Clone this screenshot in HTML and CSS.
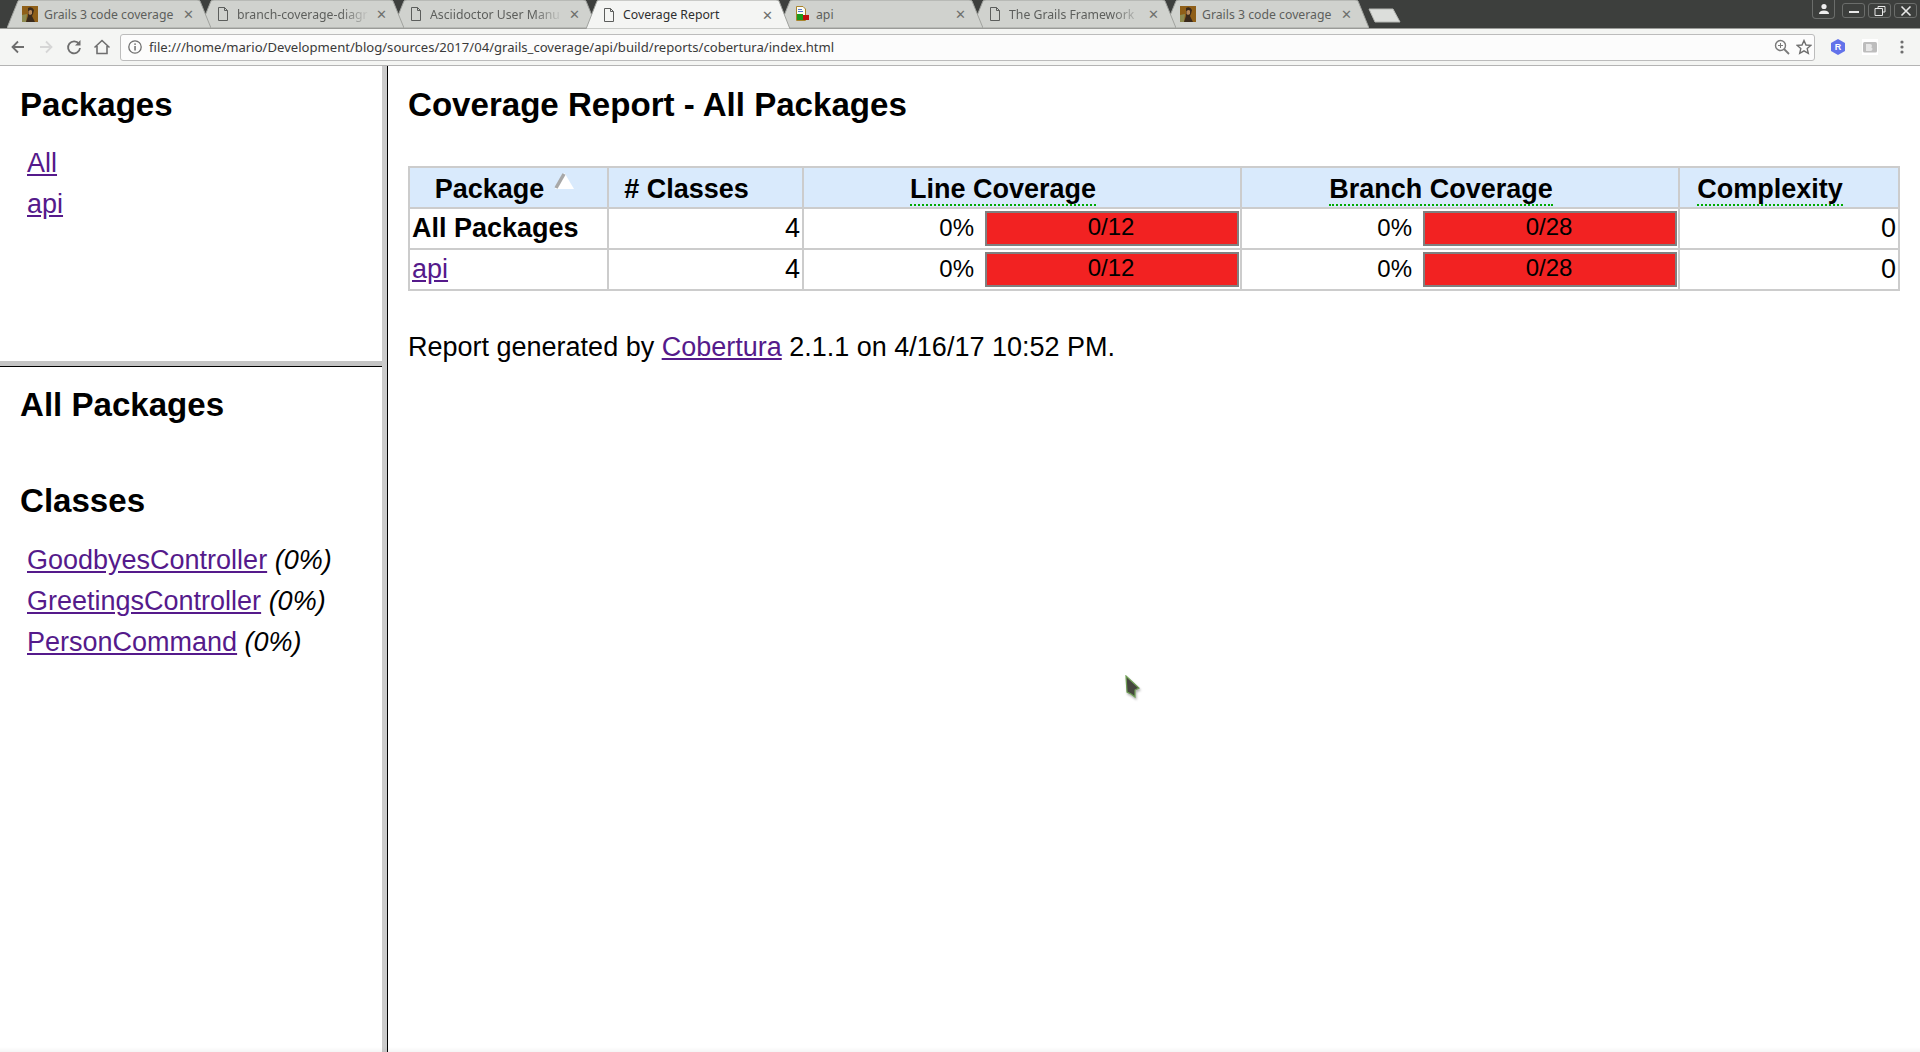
FILE: index.html
```html
<!DOCTYPE html>
<html lang="en">
<head>
  <meta charset="UTF-8" />
  <title>Coverage Report</title>
  <link rel="stylesheet" href="styles.css">
</head>
<body>

  <svg class="defs" width="0" height="0">
    <symbol id="tabShape" viewBox="0 0 204 29" preserveAspectRatio="none">
      <path d="M0 29 L11 1 Q12 0 14 0 H190 Q192 0 193 1 L204 29 Z" />
    </symbol>
    <symbol id="docIcon" viewBox="0 0 16 16">
      <path d="M3.5 1.5 H9.5 L12.5 4.5 V14.5 H3.5 Z M9.5 1.5 V4.5 H12.5" fill="none" stroke="#5c5e5c" stroke-width="1" />
    </symbol>
    <symbol id="faceIcon" viewBox="0 0 16 16">
      <rect width="16" height="16" fill="#8f5f18" />
      <path d="M0 9 L5 8 L4 16 H0 Z" fill="#8d8a50" />
      <path d="M6 2 Q10 0 12 4 L11 8 L10 10 L13 16 H4 L6 10 Z" fill="#3a2a1c" />
      <path d="M6.5 5 Q9 3 10 5 L10 8 L8 9 L6.5 8 Z" fill="#b98a5c" />
    </symbol>
  </svg>

  <!-- Tab strip -->
  <div class="tabstrip">
    <div class="tab">
      <svg class="tab-bg"><use href="#tabShape" /></svg>
      <svg class="favicon"><use href="#faceIcon" /></svg>
      <span class="tab-title">Grails 3 code coverage</span>
      <span class="tab-close">✕</span>
    </div>
    <div class="tab">
      <svg class="tab-bg"><use href="#tabShape" /></svg>
      <svg class="favicon"><use href="#docIcon" /></svg>
      <span class="tab-title fade">branch-coverage-diagr</span>
      <span class="tab-close">✕</span>
    </div>
    <div class="tab">
      <svg class="tab-bg"><use href="#tabShape" /></svg>
      <svg class="favicon"><use href="#docIcon" /></svg>
      <span class="tab-title fade">Asciidoctor User Manu</span>
      <span class="tab-close">✕</span>
    </div>
    <div class="tab active">
      <svg class="tab-bg"><use href="#tabShape" /></svg>
      <svg class="favicon"><use href="#docIcon" /></svg>
      <span class="tab-title">Coverage Report</span>
      <span class="tab-close">✕</span>
    </div>
    <div class="tab">
      <svg class="tab-bg"><use href="#tabShape" /></svg>
      <svg class="favicon" viewBox="0 0 16 16">
        <path d="M2.5 .5 H9 L11.5 3 V14.5 H2.5 Z" fill="#fdfdf5" stroke="#a8842c" />
        <rect x="4" y="3" width="4" height="1" fill="#5577cc" />
        <rect x="4" y="5" width="5" height="1" fill="#5577cc" />
        <rect x="3" y="8" width="6" height="6" fill="#1c9a1c" />
        <rect x="9" y="9" width="6" height="5" fill="#c01010" />
      </svg>
      <span class="tab-title">api</span>
      <span class="tab-close">✕</span>
    </div>
    <div class="tab">
      <svg class="tab-bg"><use href="#tabShape" /></svg>
      <svg class="favicon"><use href="#docIcon" /></svg>
      <span class="tab-title fade">The Grails Framework</span>
      <span class="tab-close">✕</span>
    </div>
    <div class="tab">
      <svg class="tab-bg"><use href="#tabShape" /></svg>
      <svg class="favicon"><use href="#faceIcon" /></svg>
      <span class="tab-title">Grails 3 code coverage</span>
      <span class="tab-close">✕</span>
    </div>
    <div class="newtab">
      <svg width="33" height="15" viewBox="0 0 33 15"><path d="M1 1 H25 L32 14 H7 Z" fill="#dcdedb" stroke="#b5b7b3" /></svg>
    </div>

    <div class="window-btns">
      <div class="profile-btn">
        <svg width="12" height="12" viewBox="0 0 12 12"><circle cx="6" cy="3.5" r="2.6" fill="#eee" /><path d="M1 11 Q1 7.5 6 7.5 Q11 7.5 11 11 Z" fill="#eee" /></svg>
      </div>
      <div class="win-btn">
        <svg width="12" height="12" viewBox="0 0 12 12"><rect x="1" y="6" width="10" height="2" fill="#e8e8e8" /></svg>
      </div>
      <div class="win-btn">
        <svg width="12" height="12" viewBox="0 0 12 12"><path d="M4 3 V1.5 H11 V7 H9 M1 3.5 H8.5 V10.5 H1 Z" fill="none" stroke="#e8e8e8" /></svg>
      </div>
      <div class="win-btn">
        <svg width="12" height="12" viewBox="0 0 12 12"><path d="M1.5 1.5 L10.5 10.5 M10.5 1.5 L1.5 10.5" stroke="#e8e8e8" stroke-width="1.6" /></svg>
      </div>
    </div>
  </div>

  <!-- Toolbar -->
  <div class="toolbar">
    <div class="nav-btns">
      <svg width="18" height="18" viewBox="0 0 18 18"><path d="M15 9 H4 M9 3.5 L3.5 9 L9 14.5" fill="none" stroke="#6e6e6e" stroke-width="1.8" /></svg>
      <svg width="18" height="18" viewBox="0 0 18 18"><path d="M3 9 H14 M9 3.5 L14.5 9 L9 14.5" fill="none" stroke="#d6d6d6" stroke-width="1.8" /></svg>
      <svg width="18" height="18" viewBox="0 0 18 18"><path d="M14 6 A6 6 0 1 0 15 10" fill="none" stroke="#6e6e6e" stroke-width="1.8" /><path d="M15.5 2 V7.5 H10 Z" fill="#6e6e6e" /></svg>
      <svg width="18" height="18" viewBox="0 0 18 18"><path d="M1.5 9.5 L9 2.5 L16.5 9.5 M4 8 V15.5 H14 V8" fill="none" stroke="#6e6e6e" stroke-width="1.6" /></svg>
    </div>
    <div class="addressbar">
      <svg class="info-icon" width="16" height="16" viewBox="0 0 16 16"><circle cx="8" cy="8" r="6.2" fill="none" stroke="#6e6e6e" stroke-width="1.3" /><rect x="7.3" y="7" width="1.5" height="4.5" fill="#6e6e6e" /><rect x="7.3" y="4.4" width="1.5" height="1.5" fill="#6e6e6e" /></svg>
      <span class="url">file:///home/mario/Development/blog/sources/2017/04/grails_coverage/api/build/reports/cobertura/index.html</span>
      <svg width="16" height="16" viewBox="0 0 16 16"><circle cx="6.5" cy="6.5" r="5" fill="none" stroke="#7a7a7a" stroke-width="1.4" /><path d="M10 10 L15 15" stroke="#7a7a7a" stroke-width="1.8" /><path d="M4 6.5 H9 M6.5 4 V9" stroke="#7a7a7a" /></svg>
      <svg width="16" height="16" viewBox="0 0 16 16"><path d="M8 1.5 L10 6 L14.8 6.4 L11.2 9.6 L12.3 14.4 L8 11.8 L3.7 14.4 L4.8 9.6 L1.2 6.4 L6 6 Z" fill="none" stroke="#6e6e6e" stroke-width="1.4" /></svg>
    </div>
    <div class="ext-btns">
      <svg width="16" height="16" viewBox="0 0 16 16"><path d="M8 0 L15 4 V12 L8 16 L1 12 V4 Z" fill="#6272ea" /><text x="8" y="11" class="ext-r">R</text></svg>
      <svg width="16" height="16" viewBox="0 0 16 16"><rect width="16" height="16" fill="#fff" /><rect x="1" y="3" width="14" height="10.5" rx="1.5" fill="#bdbdbd" /><path d="M4 5 H8 Q10 5 10 7 Q10 8 9 8.3 Q10.5 8.6 10.5 10 Q10.5 12 8.5 12 H4 Z" fill="#e6e6e6" /></svg>
      <svg width="16" height="16" viewBox="0 0 16 16"><circle cx="8" cy="3" r="1.6" fill="#6e6e6e" /><circle cx="8" cy="8" r="1.6" fill="#6e6e6e" /><circle cx="8" cy="13" r="1.6" fill="#6e6e6e" /></svg>
    </div>
  </div>

  <!-- Frames -->
  <div class="frames">
    <div class="side">
      <div class="pkg-frame">
        <h2>Packages</h2>
        <ul class="links">
          <li><a href="#">All</a></li>
          <li><a href="#">api</a></li>
        </ul>
      </div>
      <div class="class-frame">
        <h2>All Packages</h2>
        <h2 class="classes-title">Classes</h2>
        <ul class="links">
          <li><a href="#">GoodbyesController</a> <i>(0%)</i></li>
          <li><a href="#">GreetingsController</a> <i>(0%)</i></li>
          <li><a href="#">PersonCommand</a> <i>(0%)</i></li>
        </ul>
      </div>
    </div>

    <div class="main">
      <h1>Coverage Report - All Packages</h1>
      <table class="report">
        <colgroup>
          <col class="col-pkg"><col class="col-classes"><col class="col-cov"><col class="col-cov"><col class="col-cx">
        </colgroup>
        <thead>
          <tr>
            <th><span class="sort-wrap">Package<svg class="sort-icon" width="22" height="18" viewBox="0 0 22 18"><path d="M11.5 1 L21 17 H2 Z" fill="#fff" /><path d="M11 2 L3 16" stroke="#a8a8a8" stroke-width="3.5" /></svg></span></th>
            <th># Classes</th>
            <th><span class="hint">Line Coverage</span></th>
            <th><span class="hint">Branch Coverage</span></th>
            <th><span class="hint">Complexity</span></th>
          </tr>
        </thead>
        <tbody>
          <tr>
            <td><b>All Packages</b></td>
            <td class="num">4</td>
            <td><div class="cov"><span class="pct">0%</span><div class="bar">0/12</div></div></td>
            <td><div class="cov"><span class="pct">0%</span><div class="bar">0/28</div></div></td>
            <td class="num">0</td>
          </tr>
          <tr>
            <td><a href="#">api</a></td>
            <td class="num">4</td>
            <td><div class="cov"><span class="pct">0%</span><div class="bar">0/12</div></div></td>
            <td><div class="cov"><span class="pct">0%</span><div class="bar">0/28</div></div></td>
            <td class="num">0</td>
          </tr>
        </tbody>
      </table>
      <p class="footer">Report generated by <a href="#">Cobertura</a> 2.1.1 on 4/16/17 10:52 PM.</p>
    </div>
  </div>

  <div class="bottom-shade"></div>

  <!-- Mouse pointer -->
  <svg class="pointer" width="18" height="26" viewBox="0 0 18 26"><path d="M2 1 L15 13 L11 15 L11 22 L7 19 L3 17 Z" fill="#46463f" stroke="#6f9f55" stroke-width="1.2" /></svg>

</body>
</html>
```

FILE: styles.css
```css
html, body {
  height: 100%;
}

body {
  margin: 0;
  font-family: 'Liberation Sans', Arial, sans-serif;
  font-size: 27px;
  color: #000;
  background-color: #fff;
  display: flex;
  flex-direction: column;
  overflow: hidden;
}

.defs {
  display: block;
  height: 0;
}

a {
  color: #551a8b;
}

/* Tab strip */
.tabstrip {
  height: 29px;
  flex: none;
  display: flex;
  padding-left: 7px;
  background-color: #3d3f3d;
  box-shadow: inset 0 -1px 0 #9a9b98;
  font-family: 'Noto Sans', sans-serif;
  font-size: 12.25px;
}

.tab {
  position: relative;
  width: 204px;
  height: 28px;
  margin-right: -11px;
  padding: 0 16px 0 15px;
  box-sizing: border-box;
  display: flex;
  align-items: center;
  color: #5d5f5c;
}

.tab:nth-child(1) { z-index: 7; }
.tab:nth-child(2) { z-index: 6; }
.tab:nth-child(3) { z-index: 5; }
.tab:nth-child(4) { z-index: 4; }
.tab:nth-child(5) { z-index: 3; }
.tab:nth-child(6) { z-index: 2; }
.tab:nth-child(7) { z-index: 1; }

.tab.active {
  z-index: 9;
  height: 29px;
  color: #2e2e2e;
}

.tab-bg {
  position: absolute;
  left: 0;
  top: 0;
  width: 100%;
  height: 100%;
  fill: #d0d2ce;
  stroke: #9fa19d;
  stroke-width: 1;
}

.tab.active .tab-bg {
  fill: #f4f5f3;
}

.favicon {
  position: relative;
  width: 16px;
  height: 16px;
  flex: none;
  margin-right: 6px;
}

.tab-title {
  position: relative;
  flex: 1;
  white-space: nowrap;
  overflow: hidden;
}

.tab-title.fade {
  -webkit-mask-image: linear-gradient(to right, #000 78%, transparent 100%);
  mask-image: linear-gradient(to right, #000 78%, transparent 100%);
}

.tab-close {
  position: relative;
  flex: none;
  width: 14px;
  margin-left: 4px;
  font-size: 13px;
  text-align: center;
  color: #6e706d;
}

.newtab {
  display: flex;
  align-items: center;
  margin-left: 10px;
  padding-top: 1px;
}

.window-btns {
  margin-left: auto;
  padding-right: 3px;
  display: flex;
  gap: 3px;
  align-items: flex-start;
}

.profile-btn {
  width: 23px;
  height: 19px;
  margin-right: 4px;
  border: 1px solid #6b6d6b;
  border-top: none;
  border-radius: 0 0 4px 4px;
  box-sizing: border-box;
  display: flex;
  align-items: center;
  justify-content: center;
}

.win-btn {
  width: 23px;
  height: 15px;
  margin-top: 3px;
  border: 1px solid #6b6d6b;
  border-radius: 3px;
  box-sizing: border-box;
  display: flex;
  align-items: center;
  justify-content: center;
}

/* Toolbar */
.toolbar {
  height: 37px;
  flex: none;
  display: flex;
  align-items: center;
  padding: 0 10px 0 9px;
  box-sizing: border-box;
  background-color: #f4f5f3;
  border-bottom: 1px solid #b4b4b4;
}

.nav-btns {
  display: flex;
  gap: 10px;
  width: 111px;
  flex: none;
}

.addressbar {
  width: 1695px;
  height: 27px;
  flex: none;
  box-sizing: border-box;
  display: flex;
  align-items: center;
  gap: 6px;
  padding: 0 2px 0 6px;
  background-color: #fcfcfc;
  border: 1px solid #bcbcbc;
  border-radius: 3px;
  font-family: 'Noto Sans', sans-serif;
  font-size: 13.1px;
  color: #3a3a3a;
}

.url {
  flex: 1;
  white-space: nowrap;
}

.ext-btns {
  display: flex;
  gap: 16px;
  margin-left: 15px;
}

.ext-r {
  font-family: 'Liberation Sans', sans-serif;
  font-size: 9px;
  font-weight: bold;
  fill: #fff;
  text-anchor: middle;
}

/* Frames */
.frames {
  flex: 1;
  display: flex;
  min-height: 0;
}

.side {
  width: 388px;
  flex: none;
  box-sizing: border-box;
  display: flex;
  flex-direction: column;
  border-right: 1px solid #000;
  box-shadow: inset -5px 0 0 #cbcbcb;
  padding-right: 5px;
}

.pkg-frame {
  height: 300px;
  flex: none;
  box-sizing: border-box;
  padding: 20px 0 0 20px;
  border-bottom: 5px solid #c4c4c4;
}

.class-frame {
  flex: 1;
  padding: 19px 0 0 20px;
  border-top: 1px solid #000;
}

h1, h2 {
  margin: 0;
  font-size: 33.1px;
  line-height: 38px;
  font-weight: bold;
}

.classes-title {
  margin-top: 58px;
}

.links {
  list-style: none;
  margin: 19px 0 0 7px;
  padding: 0;
  line-height: 41px;
}

.classes-title + .links {
  margin-top: 20px;
}

.main {
  flex: 1;
  padding: 20px 20px 0;
  min-width: 0;
}

/* Report table */
.report {
  width: 100%;
  margin-top: 42px;
  table-layout: fixed;
  border-collapse: collapse;
}

.col-pkg { width: 199px; }
.col-classes { width: 195px; }
.col-cov { width: 438px; }
.col-cx { width: 220px; }

.report th,
.report td {
  border: 2px solid #cccccc;
  height: 41px;
  padding: 0 2px;
  box-sizing: border-box;
  white-space: nowrap;
}

.report th {
  background-color: #d9eafc;
  padding-top: 3px;
  padding-right: 40px;
  text-align: center;
  line-height: 30px;
}

.report td.num {
  text-align: right;
}

.sort-wrap {
  position: relative;
}

.sort-icon {
  position: absolute;
  left: calc(100% + 9px);
  top: -2px;
}

.hint {
  border-bottom: 2px dotted #00aa00;
}

.cov {
  display: flex;
  align-items: center;
  justify-content: flex-end;
  gap: 11px;
  margin-right: -1px;
  font-size: 24px;
  line-height: 27px;
}

.pct {
  margin-bottom: 2px;
}

.bar {
  width: 254px;
  height: 35px;
  box-sizing: border-box;
  border: 2px solid #808080;
  padding-right: 2px;
  background-color: #f22222;
  line-height: 28px;
  text-align: center;
}

.footer {
  margin: 36px 0 0;
  line-height: 41px;
}

.bottom-shade {
  position: absolute;
  left: 0;
  right: 0;
  bottom: 0;
  height: 5px;
  background: linear-gradient(to bottom, rgba(0, 0, 0, 0), rgba(0, 0, 0, 0.04));
}

.pointer {
  position: absolute;
  left: 1124px;
  top: 675px;
  filter: drop-shadow(1px 2px 1px rgba(0, 0, 0, 0.3));
}
```
